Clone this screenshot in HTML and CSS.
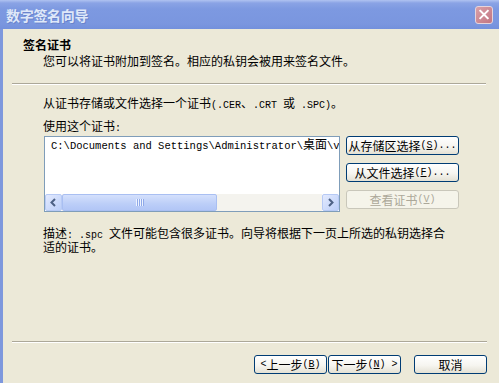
FILE: index.html
```html
<!DOCTYPE html>
<html lang="zh-CN">
<head>
<meta charset="utf-8">
<title>数字签名向导</title>
<link rel="stylesheet" href="styles.css">
</head>
<body>
<div class="window">
  <div class="titlebar">
    <span class="title">数字签名向导</span>
    <span class="close"><svg width="17" height="17" viewBox="0 0 17 17"><path d="M4.5 4.5L12.5 12.5M12.5 4.5L4.5 12.5" stroke="#fff" stroke-width="2" stroke-linecap="square"/></svg></span>
  </div>
  <div class="client">
    <div class="header">
      <div class="h-title">签名证书</div>
      <div class="h-sub">您可以将证书附加到签名。相应的私钥会被用来签名文件。</div>
    </div>
    <div class="sep"></div>
    <div class="main">
      <p class="line1">从证书存储或文件选择一个证书<span class="m">(.CER</span>、<span class="m">.CRT </span>或<span class="m"> .SPC)</span>。</p>
      <p class="label">使用这个证书<span class="m">:</span></p>
      <div class="row">
        <div class="listbox">
          <div class="items"><span class="path">C:\Documents and Settings\Administrator\</span>桌面<span class="path">\vbc</span></div>
          <div class="hscroll">
            <span class="sb-btn"><svg width="15" height="15" viewBox="0 0 15 15"><path d="M9 4L5.5 7.5L9 11" fill="none" stroke="#4d6185" stroke-width="2"/></svg></span>
            <span class="sb-track"><span class="thumb"><span class="grip"></span></span></span>
            <span class="sb-btn"><svg width="15" height="15" viewBox="0 0 15 15"><path d="M6 4L9.5 7.5L6 11" fill="none" stroke="#4d6185" stroke-width="2"/></svg></span>
          </div>
        </div>
        <div class="side">
          <button class="btn">从存储区选择<span class="m">(<u>S</u>)...</span></button>
          <button class="btn">从文件选择<span class="m">(<u>F</u>)...</span></button>
          <button class="btn" disabled>查看证书<span class="m">(<u>V</u>)</span></button>
        </div>
      </div>
      <p class="desc">描述<span class="m">: .spc </span>文件可能包含很多证书。向导将根据下一页上所选的私钥选择合<br>适的证书。</p>
    </div>
    <div class="footer">
      <div class="sep"></div>
      <div class="buttons">
        <button class="btn wide"><span class="m">&lt; </span>上一步<span class="m">(<u>B</u>)</span></button>
        <button class="btn wide">下一步<span class="m">(<u>N</u>) &gt;</span></button>
        <button class="btn wide cancel">取消</button>
      </div>
    </div>
  </div>
</div>
</body>
</html>
```
FILE: styles.css
```css
* { box-sizing: border-box; }
html, body { margin: 0; padding: 0; }
body {
  width: 499px;
  height: 383px;
  overflow: hidden;
  background: #ece9d8;
  font-family: "Noto Sans CJK SC", "Noto Sans", sans-serif;
  font-size: 12px;
  color: #000;
}
.window { display: flex; flex-direction: column; height: 383px; }
.titlebar {
  height: 29px;
  flex: none;
  display: flex;
  align-items: center;
  justify-content: space-between;
  padding: 0 6px 0 6px;
  background: linear-gradient(#b0c3f1 0, #8aa3e5 3px, #7d99e1 9px, #7a96df 24px, #7390dc 29px);
}
.title {
  color: #dfe8f9;
  font-weight: bold;
  font-size: 14px;
  line-height: 16px;
  letter-spacing: -0.3px;
  text-shadow: 1px 1px 0 #6a84cc;
}
.close {
  width: 18px;
  height: 18px;
  border: 1px solid #e6d4dc;
  border-radius: 3px;
  background: linear-gradient(135deg, #d9a0a8, #c27582);
  display: flex;
  align-items: center;
  justify-content: center;
}
.client {
  flex: 1;
  display: flex;
  flex-direction: column;
  border-left: 3px solid #7e98dd;
}
.m { font-family: "Liberation Mono", monospace; font-size: 10px; line-height: 1; }
.path { font-family: "Liberation Mono", monospace; font-size: 10.5px; line-height: 1; }
.header { padding: 8px 0 0 20px; }
.h-title { font-weight: bold; line-height: 16px; }
.h-sub { line-height: 16px; padding-left: 20px; }
.sep {
  margin: 14px 13px 0 9px;
  height: 2px;
  border-top: 1px solid #aca899;
  border-bottom: 1px solid #fff;
}
.main { padding: 10px 0 0 40px; }
p { margin: 0; }
.line1 { line-height: 16px; height: 16px; }
.label { margin-top: 7px; line-height: 16px; height: 16px; }
.row { display: flex; margin-top: 2px; margin-left: 1px; gap: 6px; }
.listbox {
  width: 296px;
  height: 76px;
  border: 1px solid #7f9db9;
  background: #fff;
  display: flex;
  flex-direction: column;
}
.items {
  flex: 1;
  padding: 0 0 0 6px;
  line-height: 13px;
  white-space: nowrap;
  overflow: hidden;
}
.hscroll { height: 17px; display: flex; flex: none; }
.sb-btn {
  width: 17px;
  height: 17px;
  border: 1px solid #b7caf5;
  border-radius: 2px;
  background: linear-gradient(135deg, #e3eafe, #bccff9);
  display: flex;
  align-items: center;
  justify-content: center;
}
.sb-track { flex: 1; background: #f4f3ee; display: flex; }
.thumb {
  width: 155px;
  height: 17px;
  border: 1px solid #a9bff2;
  border-radius: 2px;
  background: linear-gradient(#d4e0fc, #bccef8 60%, #b2c6f6);
  display: flex;
  align-items: center;
  justify-content: center;
}
.grip {
  width: 8px;
  height: 7px;
  background: repeating-linear-gradient(90deg, #eef3fe 0 1px, #8fa9e9 1px 2px);
}
.side { display: flex; flex-direction: column; gap: 8px; }
.btn {
  font: inherit;
  width: 113px;
  height: 19px;
  padding: 0;
  border: 1px solid #003c74;
  border-radius: 3px;
  background: linear-gradient(#ffffff 0%, #f6f5f0 55%, #e4e1d4 100%);
  color: #000;
  display: flex;
  align-items: center;
  justify-content: center;
  line-height: 12px;
}
.btn:disabled {
  border-color: #c9c7ba;
  color: #aca899;
  background: #f5f4ea;
}
.desc { margin-top: 15px; line-height: 12px; }
.footer { margin-top: auto; }
.footer .sep { margin-top: 0; margin-right: 12px; }
.buttons {
  display: flex;
  justify-content: flex-end;
  gap: 1px;
  padding: 12px 12px 9px 0;
}
.btn.wide { width: 73px; }
.btn.cancel { margin-left: 12px; }
```
